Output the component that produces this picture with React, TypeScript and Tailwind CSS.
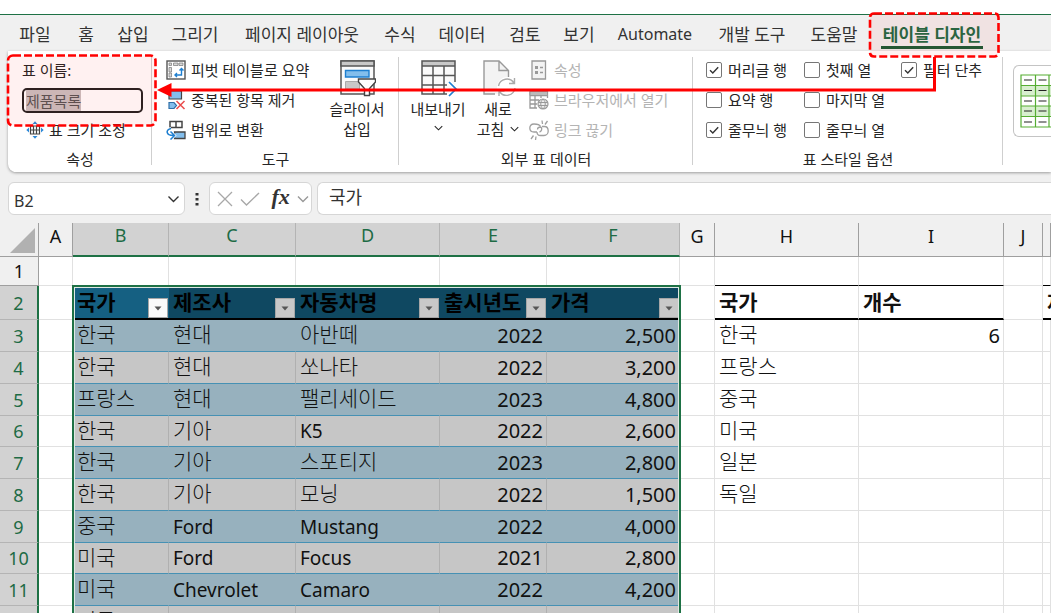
import { useEffect, useRef } from "react";
import type { ReactNode } from "react";

const tabs = [
  { label: "파일", width: "w-[62px]" },
  { label: "홈", width: "w-[40px]" },
  { label: "삽입", width: "w-[54px]" },
  { label: "그리기", width: "w-[70px]" },
  { label: "페이지 레이아웃", width: "w-[144px]" },
  { label: "수식", width: "w-[52px]" },
  { label: "데이터", width: "w-[72px]" },
  { label: "검토", width: "w-[54px]" },
  { label: "보기", width: "w-[54px]" },
  { label: "Automate", width: "w-[98px]" },
  { label: "개발 도구", width: "w-[96px]" },
  { label: "도움말", width: "w-[68px]" },
  { label: "테이블 디자인", width: "w-[128px]" },
];

const columns = [
  { name: "A", width: "w-[34px]", selected: false },
  { name: "B", width: "w-[96px]", selected: true },
  { name: "C", width: "w-[127px]", selected: true },
  { name: "D", width: "w-[144px]", selected: true },
  { name: "E", width: "w-[107px]", selected: true },
  { name: "F", width: "w-[133px]", selected: true },
  { name: "G", width: "w-[35px]", selected: false },
  { name: "H", width: "w-[144px]", selected: false },
  { name: "I", width: "w-[145px]", selected: false },
  { name: "J", width: "w-[39px]", selected: false },
  { name: "", width: "", selected: false },
];

const cars = [
  ["한국", "현대", "아반떼", "2022", "2,500"],
  ["한국", "현대", "쏘나타", "2022", "3,200"],
  ["프랑스", "현대", "팰리세이드", "2023", "4,800"],
  ["한국", "기아", "K5", "2022", "2,600"],
  ["한국", "기아", "스포티지", "2023", "2,800"],
  ["한국", "기아", "모닝", "2022", "1,500"],
  ["중국", "Ford", "Mustang", "2022", "4,000"],
  ["미국", "Ford", "Focus", "2021", "2,800"],
  ["미국", "Chevrolet", "Camaro", "2022", "4,200"],
  ["미국", "", "", "", ""],
];

const summary = [
  ["한국", "6"],
  ["프랑스", ""],
  ["중국", ""],
  ["미국", ""],
  ["일본", ""],
  ["독일", ""],
];

function cellText(value: string) {
  if (/^[가-힣]/.test(value)) return "pb-[3px] text-[21px] font-light";
  if (/^[A-Z]/.test(value)) return "text-[19px]";
  return "text-[20px]";
}

function Chevron({ className }: { className: string }) {
  return (
    <svg viewBox="0 0 12 8" className={className} fill="none" stroke="currentColor" strokeWidth="1.4">
      <path d="M1 1.5 6 6.5 11 1.5" />
    </svg>
  );
}

function ResizeIcon() {
  return (
    <svg viewBox="0 0 18 18" className="size-[18px] shrink-0" fill="none">
      <path d="M4.5 5h9v8h-9zM4.5 9h9M7.5 5v8M10.5 5v8" stroke="#444" strokeWidth="1.2" />
      <path d="M6.500 3 9 .3 11.500 3zM6.500 15 9 17.700 11.500 15zM3 6.500.3 9 3 11.500zM15 6.500 17.700 9 15 11.500z" fill="#2b88d8" />
    </svg>
  );
}

function PivotIcon() {
  return (
    <svg viewBox="0 0 20 20" className="size-5 shrink-0" fill="none">
      <rect x="1" y="1" width="18" height="18" fill="#fff" stroke="#555" strokeWidth="1.4" />
      <path d="M3 3h2.500v2.500H3zM7.500 3H12v2.500H7.500zM13 3h4v2.500h-4zM3 7.500h2.500V12H3zM3 13h2.500v4H3z" fill="#d8d8d8" stroke="#777" strokeWidth=".7" />
      <path d="M9 15H15.500V8.500M11 13 9 15 11 17M13.500 10.500 15.500 8.500 17.500 10.500" stroke="#1e7fd0" strokeWidth="1.400" />
    </svg>
  );
}

function DuplicatesIcon() {
  return (
    <svg viewBox="0 0 20 20" className="size-5 shrink-0" fill="none">
      <path d="M3 1h12.500v8H3z" fill="#83beec" stroke="#444" strokeWidth="1.200" />
      <path d="M3 12.500h5l2.500 3-2.500 3H3z" fill="#83beec" stroke="#2f6fa8" strokeWidth="1.200" />
      <path d="M10.500 11l8 8M18.500 11l-8 8" stroke="#ea4b4b" strokeWidth="1.500" />
    </svg>
  );
}

function RangeIcon() {
  return (
    <svg viewBox="0 0 20 20" className="size-5 shrink-0" fill="none">
      <path d="M4 1.500h12v6H4zM10 1.500v6" fill="#fff" stroke="#444" strokeWidth="1.500" />
      <path d="M8.500 12h10.500v6.500h-10.500z" fill="#83beec" stroke="#444" strokeWidth="1.300" />
      <path d="M5 8.500C-.5 9.500-.5 15.500 7 15.500M4.500 11.500 8.500 15.500 4.500 19.500" stroke="#fff" strokeWidth="3" />
      <path d="M5 8.500C-.5 9.500-.5 15.500 7.500 15.500M4.500 11.500 8.500 15.500 4.500 19.500" stroke="#1e7fd0" strokeWidth="1.500" />
    </svg>
  );
}

function SlicerIcon() {
  return (
    <svg viewBox="0 0 38 38" className="size-[38px]" fill="none">
      <path d="M3 2h33v33H3z" fill="#fafafa" stroke="#555" strokeWidth="1.500" />
      <path d="M3 2h33v5H3z" fill="#c8c8c8" stroke="#555" strokeWidth="1.500" />
      <path d="M7.500 11.500h23.500v6.500H7.500z" fill="#83beec" stroke="#1e7fd0" strokeWidth="1.400" />
      <path d="M7.500 22.500h14v7.500h-14z" fill="#c8c8c8" stroke="#aaa" />
      <path d="M20.500 20h17v3l-6 6.500v7h-5v-7l-6-6.500z" fill="#fff" stroke="#444" strokeWidth="1.400" />
    </svg>
  );
}

function ExportIcon() {
  return (
    <svg viewBox="0 0 38 38" className="size-[38px]" fill="none">
      <path d="M3 2h33v33H3z" fill="#fafafa" />
      <path d="M3 2h33v5H3z" fill="#c8c8c8" />
      <path d="M28 35H3V2h33v21M3 7h33M3 16.500h33M3 26h25M14 7v28M25 7v28" stroke="#555" strokeWidth="1.500" />
      <path d="M30 23l7 7-7 7" stroke="#fff" strokeWidth="4" />
      <path d="M30 23l7 7-7 7" stroke="#1e7fd0" strokeWidth="1.700" />
    </svg>
  );
}

function RefreshIcon() {
  return (
    <svg viewBox="0 0 36 38" className="h-[38px] w-9" fill="none">
      <path d="M4 2h15l9.500 9.500V35H4z" fill="#f3f3f3" />
      <path d="M15 35H4V2h15l9.500 9.500V18M19 2v9.500h9.500" stroke="#999" strokeWidth="1.400" />
      <circle cx="27" cy="28" r="10" fill="#fff" />
      <path d="M18.500 27a8.500 8.500 0 0 1 15.500-3M35 29a8.500 8.500 0 0 1-15.500 3.500M34.500 19v5.500H29M19 37v-5h5.500" stroke="#aaa" strokeWidth="1.400" />
    </svg>
  );
}

function PropertiesIcon() {
  return (
    <svg viewBox="0 0 20 20" className="size-5 shrink-0" fill="none">
      <path d="M3 1h13.500v18H3z" fill="#f3f3f3" stroke="#999" strokeWidth="1.300" />
      <path d="M6 6h3v3H6zM6 11h3v3H6z" fill="#999" />
      <path d="M11 7.500h3M11 12.500h3" stroke="#999" strokeWidth="1.400" />
    </svg>
  );
}

function BrowserIcon() {
  return (
    <svg viewBox="0 0 20 20" className="size-5 shrink-0" fill="none">
      <path d="M8 18H1V1.500h17.500V8M1 5.500h17.500M1 10h9M1 14h7M6 5.500V18M12 5.500V8" stroke="#999" strokeWidth="1.300" />
      <path d="M1 1.500h17.500v4H1z" fill="#bbb" stroke="#999" />
      <circle cx="14" cy="14" r="5" fill="#eee" stroke="#999" strokeWidth="1.200" />
      <path d="M9.500 12.500h9M9.500 15.500h9M14 9c-3 3-3 7 0 10M14 9c3 3 3 7 0 10" stroke="#999" />
    </svg>
  );
}

function UnlinkIcon() {
  return (
    <svg viewBox="0 0 20 20" className="size-5 shrink-0" fill="none" stroke="#a0a0a0" strokeWidth="1.300">
      <path d="M11.500 6.500C10.500 4 8 4 5 4 2 4 .8 6 .8 8c0 2.500 1.700 4 4.200 4H8" />
      <path d="M8.500 9.500C8.500 7.500 10 7 12 7M13 6.500h2.500c2.500 0 3.700 2 3.700 4.500S17.500 15.500 15 15.500h-3.500c-2.500 0-3.500-1.500-3.500-3.500M12 7c1.500 2 .5 4.500-1.500 5" />
      <path d="M13.500 4 13 .5M16 4.500 18.500 1M4.500 15.500 2 19M7 16.500 6.500 20" />
    </svg>
  );
}

function ArrangedGroup({ title, width, children }: { title: string; width: string; children: ReactNode }) {
  return (
    <section className={`relative flex shrink-0 flex-col ${width}`}>
      <div className="flex h-[90px]">{children}</div>
      <h2 className="flex h-[27px] items-center justify-center">{title}</h2>
      <span className="absolute top-[2px] right-0 h-[108px] w-px bg-[#cfcfcf]" />
    </section>
  );
}

function SmallButton({ icon, label, disabled = false }: { icon: ReactNode; label: string; disabled?: boolean }) {
  return (
    <button disabled={disabled} className="flex h-[30px] items-center gap-[5px] whitespace-nowrap disabled:text-[#b4b4b4]">
      {icon}
      {label}
    </button>
  );
}

function Check({ label, on = false }: { label: string; on?: boolean }) {
  return (
    <label className="flex h-[30px] items-center gap-[6px] whitespace-nowrap">
      <span className="grid size-4 shrink-0 place-items-center">
        <input
          type="checkbox"
          defaultChecked={on}
          className="peer col-start-1 row-start-1 size-4 appearance-none rounded-[2px] border border-[#767676] bg-white"
        />
        <svg viewBox="0 0 16 16" className="pointer-events-none col-start-1 row-start-1 size-4 opacity-0 peer-checked:opacity-100" fill="none">
          <path d="M4 8.200 6.800 11 12.200 5.200" stroke="#333" strokeWidth="1.400" />
        </svg>
      </span>
      {label}
    </label>
  );
}

function FilterButton({ active = false, label }: { active?: boolean; label: string }) {
  return (
    <button
      aria-label={label}
      className={`flex size-5 shrink-0 items-center justify-center border border-[#a6a6a6] ${active ? "bg-[#fafafa]" : "bg-[#c8c8c8]"}`}
    >
      <svg viewBox="0 0 8 5" className="h-[5px] w-2">
        <path d="M.5.5h7L4 4.500z" fill="#555" />
      </svg>
    </button>
  );
}

function TableHeader({ label, active = false }: { label: string; active?: boolean }) {
  return (
    <td className={`border-b-2 border-black p-0 ${active ? "bg-[#156082]" : "bg-[#0f4861]"}`}>
      <div className="flex h-[32px] items-end justify-between pr-px pl-1">
        <span className="self-center text-[21px] leading-[30px] font-bold whitespace-nowrap text-black">{label}</span>
        <FilterButton active={active} label={label} />
      </div>
    </td>
  );
}

function Ribbon() {
  const nameRef = useRef<HTMLInputElement>(null);
  useEffect(() => {
    nameRef.current?.focus();
    nameRef.current?.select();
  }, []);

  return (
    <div className="ml-2 flex h-[121px] shrink-0 overflow-hidden rounded-bl-lg bg-white pt-1 text-[15px] leading-5 text-[#262626] shadow-[0_1px_3px_rgba(0,0,0,0.35)]">
      <ArrangedGroup title="속성" width="w-[144px]">
        <div className="flex flex-col pl-[14px]">
          <label htmlFor="table-name" className="flex h-[30px] items-center">
            표 이름:
          </label>
          <div className="flex h-[30px] items-center">
            <input
              id="table-name"
              ref={nameRef}
              defaultValue="제품목록"
              className="h-[25px] w-[121px] rounded-[5px] border-2 border-[#222] bg-white px-[2px] outline-none selection:bg-[#c9c1c1] selection:text-[#555]"
            />
          </div>
          <div className="pl-1">
            <SmallButton icon={<ResizeIcon />} label="표 크기 조정" />
          </div>
        </div>
      </ArrangedGroup>

      <ArrangedGroup title="도구" width="w-[247px]">
        <div className="flex w-[164px] flex-col pl-[14px]">
          <SmallButton icon={<PivotIcon />} label="피벗 테이블로 요약" />
          <SmallButton icon={<DuplicatesIcon />} label="중복된 항목 제거" />
          <SmallButton icon={<RangeIcon />} label="범위로 변환" />
        </div>
        <button className="flex w-[82px] flex-col items-center pt-1">
          <SlicerIcon />
          <span className="pt-[2px]">슬라이서</span>
          <span>삽입</span>
        </button>
      </ArrangedGroup>

      <ArrangedGroup title="외부 표 데이터" width="w-[294px]">
        <button className="flex w-[78px] flex-col items-center pt-1">
          <ExportIcon />
          <span className="pt-[2px]">내보내기</span>
          <Chevron className="mt-[6px] h-[6px] w-[9px]" />
        </button>
        <button className="flex w-[42px] flex-col items-center pt-1">
          <RefreshIcon />
          <span className="pt-[2px]">새로</span>
          <span className="flex items-center gap-[6px] whitespace-nowrap">
            고침
            <Chevron className="h-[6px] w-[9px]" />
          </span>
        </button>
        <div className="flex flex-col pl-[10px]">
          <SmallButton disabled icon={<PropertiesIcon />} label="속성" />
          <SmallButton disabled icon={<BrowserIcon />} label="브라우저에서 열기" />
          <SmallButton disabled icon={<UnlinkIcon />} label="링크 끊기" />
        </div>
      </ArrangedGroup>

      <ArrangedGroup title="표 스타일 옵션" width="w-[310px]">
        <div className="grid grid-cols-[98px_97px_auto] content-start pl-[13px]">
          <Check label="머리글 행" on />
          <Check label="첫째 열" />
          <Check label="필터 단추" on />
          <Check label="요약 행" />
          <Check label="마지막 열" />
          <span />
          <Check label="줄무늬 행" on />
          <Check label="줄무늬 열" />
        </div>
      </ArrangedGroup>

      <div className="mt-[10px] ml-[10px] h-[72px] flex-1 overflow-hidden rounded-l-md border border-r-0 border-[#c4c4c4] pt-2 pl-[6px]">
        <svg viewBox="0 0 76 54" className="h-[54px] w-[76px]" fill="none">
          <path d="M1 11.500h74v10.500H1zM1 32h74v10.500H1z" fill="#d8efcf" />
          <path d="M1 1h74v52H1zM1 11.500h74M1 22h74M1 32h74M1 42.500h74M15.500 1v52M29 1v52M43.500 1v52M58 1v52" stroke="#56ad33" strokeWidth="1.200" />
          <path d="M4 6h8M18.500 6h8M4 16.500h8M18.500 16.500h8M4 27h8M18.500 27h8M4 37h8M18.500 37h8M4 48h8M18.500 48h8" stroke="#222" strokeWidth="1.200" />
        </svg>
      </div>
    </div>
  );
}

function FormulaBar() {
  return (
    <div className="mt-[10px] mb-2 flex h-[33px] shrink-0 pl-2 text-[#333]">
      <div className="flex w-[177px] items-center justify-between rounded-md border border-[#d6d6d6] bg-white pr-1 pl-[5px]">
        <input aria-label="이름 상자" defaultValue="B2" className="w-24 pt-1 text-[16px] outline-none" />
        <Chevron className="h-2 w-[13px]" />
      </div>
      <svg viewBox="0 0 4 14" className="mx-[10px] h-[14px] w-1 self-center" fill="#333">
        <path d="M.5 1h3v2.500h-3zM.5 6h3v2.500h-3zM.5 11h3v2.500h-3z" />
      </svg>
      <div className="flex w-[103px] items-center justify-between rounded-md border border-[#d6d6d6] bg-white pr-[2px] pl-[7px]">
        <button aria-label="취소">
          <svg viewBox="0 0 16 16" className="size-4" fill="none" stroke="#a8a8a8" strokeWidth="1.300">
            <path d="M1 1l14 14M15 1 1 15" />
          </svg>
        </button>
        <button aria-label="입력">
          <svg viewBox="0 0 20 14" className="h-[14px] w-5" fill="none" stroke="#a8a8a8" strokeWidth="1.400">
            <path d="M1 7.500 6.500 13 19 1" />
          </svg>
        </button>
        <button className="pb-1 pl-1 font-['Liberation_Serif',serif] text-[22px] leading-6 font-bold italic">fx</button>
        <Chevron className="h-2 w-3 text-[#999]" />
      </div>
      <input
        aria-label="수식 입력줄"
        defaultValue="국가"
        className="ml-[5px] min-w-0 flex-1 rounded-l-md border border-r-0 border-[#d6d6d6] bg-white pb-[2px] pl-[11px] text-[18px] outline-none"
      />
    </div>
  );
}

function Sheet() {
  const grid = "border-r border-b border-[#e1e1e1] p-0";
  const rowHead = "border-r-2 border-b border-r-[#1e7145] border-b-[#b4b4b4] bg-[#d2d2d2] p-0 text-[18px] font-normal text-[#1e6b45]";

  return (
    <div className="relative flex-1 overflow-hidden bg-white">
      <table className="w-full min-w-[1051px] table-fixed border-separate border-spacing-0 text-[20px] leading-[26px] text-[#111]">
        <colgroup>
          <col className="w-[39px]" />
          {columns.map((c, i) => (
            <col key={i} className={c.width} />
          ))}
        </colgroup>
        <thead>
          <tr className="h-[34px]">
            <th className="border-r border-b border-[#9f9f9f] bg-[#f0f0f0] p-0">
              <svg viewBox="0 0 38 32" className="h-8 w-[38px]">
                <path d="M35 4v25H10z" fill="#b1b1b1" />
              </svg>
            </th>
            {columns.map((c, i) => (
              <th
                key={i}
                className={`p-0 pb-[8px] text-[18px] leading-6 font-normal ${
                  c.selected
                    ? "border-r border-b-2 border-r-[#b4b4b4] border-b-[#1e7145] bg-[#d2d2d2] text-[#1e6b45]"
                    : "border-r border-b border-[#9f9f9f] bg-[#f0f0f0] text-[#111]"
                }`}
              >
                {c.name}
              </th>
            ))}
          </tr>
        </thead>
        <tbody>
          <tr className="h-[29px]">
            <th className="border-r border-b border-[#9f9f9f] bg-[#f0f0f0] p-0 text-[18px] font-normal">1</th>
            {columns.map((c, i) => (
              <td
                key={i}
                className={`border-r border-b border-r-[#e1e1e1] p-0 ${
                  ["H", "I", ""].includes(c.name) ? "border-b-black" : "border-b-[#e1e1e1]"
                }`}
              />
            ))}
          </tr>
          <tr className="h-[34px]">
            <th className={rowHead}>2</th>
            <td className={grid} />
            <TableHeader label="국가" active />
            <TableHeader label="제조사" />
            <TableHeader label="자동차명" />
            <TableHeader label="출시년도" />
            <TableHeader label="가격" />
            <td className={grid} />
            <td className="border-r border-b-2 border-r-[#e1e1e1] border-b-black p-0 pl-1 text-[21px] font-bold">국가</td>
            <td className="border-r border-b-2 border-r-[#e1e1e1] border-b-black p-0 pl-1 text-[21px] font-bold">개수</td>
            <td className={grid} />
            <td className="overflow-hidden border-b-2 border-black p-0 pl-1 text-[21px] font-bold whitespace-nowrap">
              <div className="overflow-hidden">제</div>
            </td>
          </tr>
          {cars.map((car, r) => {
            const blue = r % 2 === 0;
            return (
              <tr key={r} className={r === 3 || r === 7 ? "h-[31px]" : "h-[32px]"}>
                <th className={rowHead}>{r + 3}</th>
                <td className={grid} />
                {car.map((value, c) => (
                  <td
                    key={c}
                    className={`border-r border-b border-b-[#4691b4] p-0 pr-[3px] pl-1 whitespace-nowrap ${
                      blue ? "border-r-[#97b1be] bg-[#97b1be]" : "border-r-[#b0b0b0] bg-[#c6c6c6]"
                    } ${c > 2 ? "text-right" : ""} ${cellText(value)}`}
                  >
                    {value}
                  </td>
                ))}
                <td className={grid} />
                <td className={`${grid} pb-[3px] pl-1 text-[21px] font-light`}>{summary[r]?.[0]}</td>
                <td className={`${grid} pr-[3px] text-right`}>{summary[r]?.[1]}</td>
                <td className={grid} />
                <td className={grid} />
              </tr>
            );
          })}
        </tbody>
      </table>
      <div className="pointer-events-none absolute top-[62px] left-[72px] h-[400px] w-[609px] border-2 border-[#1e7145] shadow-[inset_0_0_0_1px_#dfe8e4]" />
    </div>
  );
}

function Annotations() {
  return (
    <svg viewBox="0 0 1003 130" className="pointer-events-none absolute top-0 left-0 h-[130px] w-[1003px]" fill="none">
      <g fill="#ff0000" fillOpacity=".055" stroke="#ff0000" strokeWidth="2.600" strokeDasharray="8 3">
        <rect x="8" y="55.500" width="147.500" height="70" rx="5" />
        <rect x="870" y="13.500" width="128.500" height="43" rx="4" />
      </g>
      <path d="M934.500 57V90H168" stroke="#ff0000" strokeWidth="3" />
      <path d="M157 90 171.500 83v14z" fill="#ff0000" />
    </svg>
  );
}

export default function App() {
  return (
    <div className="relative flex h-screen flex-col overflow-hidden bg-[#f0f0f0] font-['Noto_Sans','Noto_Sans_CJK_KR',sans-serif]">
      <div className="h-[15px] shrink-0 border-b border-[#1e7145] bg-white" />
      <nav className="flex h-9 shrink-0 pl-1 text-[#333]">
        {tabs.map((tab, i) => {
          const current = i === tabs.length - 1;
          return (
            <button
              key={tab.label}
              className={`flex shrink-0 justify-center pt-[5px] whitespace-nowrap ${tab.width} ${
                tab.label === "Automate" ? "text-[16px]" : "text-[17px]"
              }`}
            >
              <span className={`h-[29px] px-[2px] leading-[29px] ${current ? "border-b-[3px] border-[#185c37] font-bold text-[#1e6b45]" : ""}`}>
                {tab.label}
              </span>
            </button>
          );
        })}
      </nav>
      <Ribbon />
      <FormulaBar />
      <Sheet />
      <Annotations />
    </div>
  );
}
